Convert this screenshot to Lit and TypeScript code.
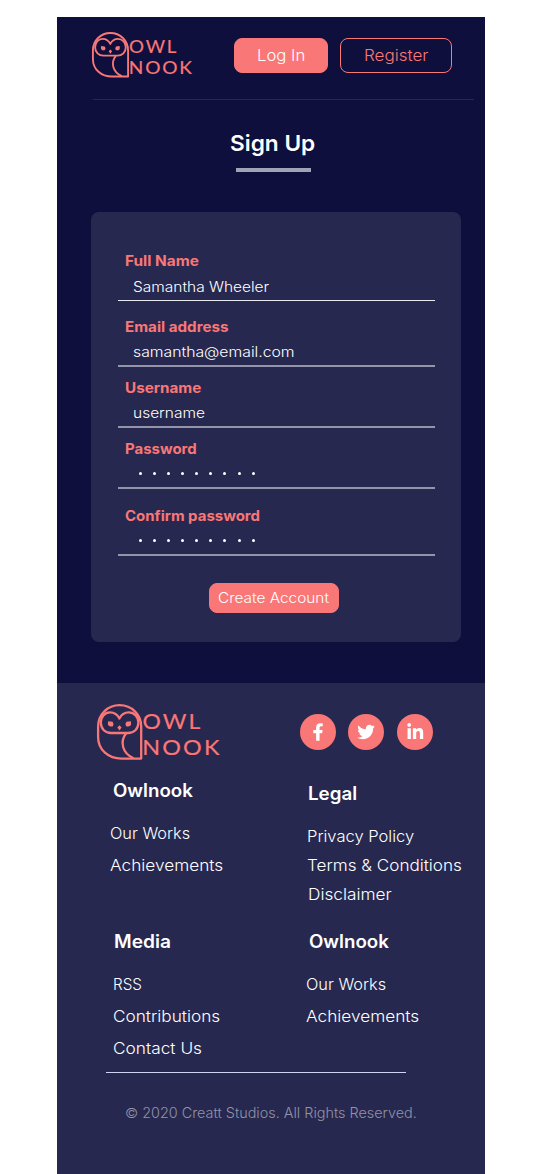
import { LitElement, html, css, svg } from "lit";
import { customElement, property } from "lit/decorators.js";

/** A single line of text, widened so that it fills the given width. */
@customElement("fit-text")
class FitText extends LitElement {
  @property() text = "";
  @property({ type: Number }) width = 100;

  static styles = css`
    :host { display: block; white-space: nowrap; text-align: left; }
    .run { display: inline-block; transform-origin: 0 50%; }
  `;

  render() {
    return html`<span class="run">${this.text}</span>`;
  }

  updated() {
    this.fit();
    document.fonts.ready.then(() => this.fit());
  }

  private fit() {
    const run = this.renderRoot.querySelector<HTMLElement>(".run");
    if (!run) return;
    const natural = run.offsetWidth;
    if (!natural) return;
    run.style.transform = `scaleX(${(this.width / natural).toFixed(4)})`;
    this.style.width = `${this.width}px`;
  }
}

@customElement("owl-logo")
class OwlLogo extends LitElement {
  static styles = css`
    :host { display: block; }
    .mark { display: block; width: 100%; height: auto; overflow: visible; }
    .line { fill: none; stroke: #fa7777; stroke-width: 2.3; stroke-linejoin: round; }
    .solid { fill: #fa7777; }
    .word { fill: #fa7777; stroke: #fa7777; stroke-width: 0.2; letter-spacing: 2px; font: 400 21.3px Lato, sans-serif; }
  `;

  render() {
    return html`<svg class="mark" viewBox="0 0 125 57" role="img" aria-label="Owl Nook">
      ${svg`
        <path class="line" d="M44.2 54.6H24.5C11.5 54.6 1.1 46 1.1 33V22.7C1.1 10.5 10.6 1.2 22.6 1.2S44.2 10.5 44.2 22.7Z" />
        <path class="line" d="M22.4 14.6C20.4 10.4 16.8 8.4 13 8.4C7.6 8.4 3.8 13 3.8 18.6C3.8 25 8.4 29 14 29H31C37 29 41.4 25 41.4 18.6C41.4 13 37.4 8.4 31.8 8.4C28 8.4 24.4 10.4 22.4 14.6Z" />
        <path class="line" d="M29.2 29.2C22.6 37.5 25.2 49.5 36.6 54.2" />
        <path class="solid" d="M11.2 17.2L15.6 17.8Q17.3 20 15.9 22.2Q13.6 23 11.6 21.8Q10.4 19.6 11.2 17.2ZM33.8 17.2L29.4 17.8Q27.7 20 29.1 22.2Q31.4 23 33.4 21.8Q34.6 19.6 33.8 17.2ZM22.5 21.3L24.6 23.6L22.5 26.6L20.4 23.6Z" />
        <text class="word" x="45.5" y="25.4" textLength="60" lengthAdjust="spacingAndGlyphs">OWL</text>
        <text class="word" x="45.2" y="51.3" textLength="79.5" lengthAdjust="spacingAndGlyphs">NOOK</text>`}
    </svg>`;
  }
}

type Link = [text: string, width: number, cls?: string];
interface Group { cls: string; title: Link; links: Link[] }

const groups: Group[] = [
  { cls: "", title: ["Owlnook", 80, "in2"], links: [["Our Works", 80.5], ["Achievements", 113]] },
  { cls: "legal", title: ["Legal", 49, "in1"], links: [["Privacy Policy", 107.5, "in0"], ["Terms & Conditions", 155, "in0"], ["Disclaimer", 84, "in1"]] },
  { cls: "media", title: ["Media", 57.5, "in0"], links: [["RSS", 28.5], ["Contributions", 107.5], ["Contact Us", 88.5]] },
  { cls: "", title: ["Owlnook", 80, "in2"], links: [["Our Works", 80.5], ["Achievements", 113]] },
];

const fields = [
  { cls: "f1", label: "Full Name", lw: 73.5, value: "Samantha Wheeler", vw: 136 },
  { cls: "f2", label: "Email address", lw: 103, value: "samantha@email.com", vw: 162 },
  { cls: "f3", label: "Username", lw: 76, value: "username", vw: 72 },
  { cls: "f4", label: "Password", lw: 71.5, value: "", vw: 0 },
  { cls: "f5", label: "Confirm password", lw: 134.7, value: "", vw: 0 },
];

@customElement("app-root")
class AppRoot extends LitElement {
  static styles = css`
    * { box-sizing: border-box; }
    :host {
      display: block; height: 1174px; padding: 17px 54px 0 57px; overflow: hidden;
      background: #fff; color: #fff; font-family: Inter, sans-serif; font-weight: 260;
    }
    .page { display: flex; flex-direction: column; height: 1157px; background: #0e0f3c; }
    .top { height: 666px; }
    .bar {
      display: flex; align-items: flex-start; height: 83px; margin: 0 11px 0 36px;
      padding-top: 15px; border-bottom: 1px solid #27284f;
    }
    .bar .logo { width: 102px; margin-left: -1.5px; }
    .btn {
      display: flex; align-items: center; justify-content: center; height: 35px; margin-top: 6px;
      padding: 0 0 2px; border: 1px solid #fa7777; border-radius: 8px; background: #fa7777; color: #fff;
      font: 260 16px/24px Inter, sans-serif;
    }
    .login { width: 94px; margin-left: 40.5px; }
    .register { width: 112px; margin-left: 12px; background: none; color: #fa7777; }
    .title { margin: 27.3px 0 0 173.3px; font-size: 22px; line-height: 32px; font-weight: 600; }
    .rule { width: 75px; height: 4px; margin: 8.7px 0 0 179px; background: #a0a3b5; }
    .card {
      display: flex; flex-direction: column; width: 370px; height: 430px; margin: 40px 0 0 34px;
      padding: 39px 26px 0 26.7px; border-radius: 8px; background: #27284f;
    }
    .field { height: 50px; border-bottom: 2px solid #9495ab; }
    .f1 { border-bottom: 1px solid #e9e9f2; }
    .f2 { margin-top: 16px; }
    .f3 { margin-top: 11px; }
    .f4 { margin-top: 11px; }
    .f5 { margin-top: 17px; }
    .label { margin-left: 7.8px; color: #fa7777; font-size: 14px; line-height: 20px; font-weight: 700; }
    .value { margin: 6px 0 0 15.5px; font-size: 14px; line-height: 20px; }
    .f2 .value, .f3 .value { margin-top: 5px; }
    .dots { display: flex; gap: 11.1px; margin: 13px 0 0 21.2px; }
    .dot { width: 3px; height: 3px; border-radius: 50%; background: #fff; }
    .create {
      width: 130px; height: 30px; margin: 27px 0 0 91.3px; padding-bottom: 0;
      font-size: 14px; line-height: 20px;
    }
    .foot { flex: 1; background: #27284f; padding-top: 21px; }
    .brand { display: flex; height: 72.5px; padding-left: 40px; }
    .brand .logo { width: 125px; }
    .social { display: flex; gap: 12.4px; margin: 10px 0 0 78px; }
    .disc { display: block; width: 36px; height: 36px; }
    .groups { display: grid; grid-template: 151px 144px / 196px 1fr; padding-left: 53px; }
    .head { font-size: 18px; line-height: 28px; font-weight: 600; margin-bottom: 16.5px; }
    .link { font-size: 16px; line-height: 24px; margin-bottom: 8px; }
    .in0 { margin-left: 0.5px; }
    .in1 { margin-left: 1.5px; }
    .in2 { margin-left: 2.5px; }
    .legal { padding-top: 3px; }
    .legal .link { margin-bottom: 5px; }
    .media { padding-left: 3px; }
    .end { width: 300px; height: 1px; margin: 0.5px 0 0 49px; background: #d3d3f4; }
    .copy { margin: 30px 0 0 68px; color: #9293a7; font-size: 14px; line-height: 20px; }
  `;

  private disc(name: string, glyph: unknown) {
    return html`<svg class="disc" viewBox="0 0 36 36" role="img" aria-label=${name}>
      <circle cx="18" cy="18" r="18" fill="#fa7777" />${glyph}
    </svg>`;
  }

  private group(g: Group) {
    return html`<nav class=${g.cls}>
      <fit-text class="head ${g.title[2] ?? ""}" .text=${g.title[0]} .width=${g.title[1]}></fit-text>
      ${g.links.map(([t, w, c]) => html`<fit-text class="link ${c ?? ""}" .text=${t} .width=${w}></fit-text>`)}
    </nav>`;
  }

  render() {
    return html`<div class="page">
      <main class="top">
        <header class="bar">
          <owl-logo class="logo"></owl-logo>
          <button class="btn login"><fit-text .text=${"Log In"} .width=${48}></fit-text></button>
          <button class="btn register"><fit-text .text=${"Register"} .width=${65}></fit-text></button>
        </header>
        <fit-text class="title" .text=${"Sign Up"} .width=${85.5}></fit-text>
        <div class="rule"></div>
        <form class="card">
          ${fields.map((f) => html`<div class="field ${f.cls}">
            <fit-text class="label" .text=${f.label} .width=${f.lw}></fit-text>
            ${f.value
              ? html`<fit-text class="value" .text=${f.value} .width=${f.vw}></fit-text>`
              : html`<div class="dots">${Array.from({ length: 9 }, () => html`<i class="dot"></i>`)}</div>`}
          </div>`)}
          <button type="button" class="btn create"><fit-text .text=${"Create Account"} .width=${111}></fit-text></button>
        </form>
      </main>
      <footer class="foot">
        <div class="brand">
          <owl-logo class="logo"></owl-logo>
          <div class="social">
            ${this.disc("Facebook", svg`<path fill="#fff" transform="translate(12.5 9.2) scale(.0345)" d="M279.14 288l14.22-92.66h-88.91v-60.13c0-25.35 12.42-50.06 52.24-50.06h40.42V6.26S260.43 0 225.36 0c-73.22 0-121.08 44.38-121.08 124.72v70.62H22.89V288h81.39v224h100.17V288z" />`)}
            ${this.disc("Twitter", svg`<path fill="#fff" transform="translate(9.2 9.2) scale(.0345)" d="M459.37 151.716c.325 4.548.325 9.097.325 13.645 0 138.72-105.583 298.558-298.558 298.558-59.452 0-114.68-17.219-161.137-47.106 8.447.974 16.568 1.299 25.34 1.299 49.055 0 94.213-16.568 130.274-44.832-46.132-.975-84.792-31.188-98.112-72.772 6.498.974 12.995 1.624 19.818 1.624 9.421 0 18.843-1.3 27.614-3.573-48.081-9.747-84.143-51.98-84.143-102.985v-1.299c13.969 7.797 30.214 12.67 47.431 13.319-28.264-18.843-46.781-51.005-46.781-87.391 0-19.492 5.197-37.36 14.294-52.954 51.655 63.675 129.3 105.258 216.365 109.807-1.624-7.797-2.599-15.918-2.599-24.04 0-57.828 46.782-104.934 104.934-104.934 30.213 0 57.502 12.67 76.67 33.137 23.715-4.548 46.456-13.32 66.599-25.34-7.798 24.366-24.366 44.833-46.132 57.827 21.117-2.273 41.584-8.122 60.426-16.243-14.292 20.791-32.161 39.308-52.628 54.253z" />`)}
            ${this.disc("LinkedIn", svg`<path fill="#fff" transform="translate(10.3 9) scale(.0355)" d="M100.28 448H7.4V148.9h92.88zM53.79 108.1C24.09 108.1 0 83.5 0 53.8a53.79 53.79 0 0 1 107.58 0c0 29.7-24.1 54.3-53.79 54.3zM447.9 448h-92.68V302.4c0-34.7-.7-79.2-48.29-79.2-48.29 0-55.69 37.7-55.69 76.7V448h-92.78V148.9h89.08v40.8h1.3c12.4-23.5 42.69-48.3 87.88-48.3 94 0 111.28 61.9 111.28 142.3V448z" />`)}
          </div>
        </div>
        <div class="groups">${groups.map((g) => this.group(g))}</div>
        <div class="end"></div>
        <fit-text class="copy" .text=${"© 2020 Creatt Studios. All Rights Reserved."} .width=${292}></fit-text>
      </footer>
    </div>`;
  }
}
